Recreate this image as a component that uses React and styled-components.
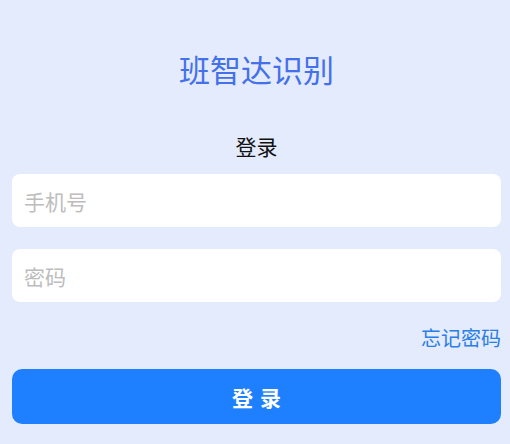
import React, { useState } from 'react';
import styled, { createGlobalStyle } from 'styled-components';

const GlobalStyle = createGlobalStyle`
    html, body {
        margin: 0;
        padding: 0;
        background: #e3ebfd;
    }
    body {
        font-family: "Noto Sans CJK SC", "Noto Sans", sans-serif;
    }
`

const Page = styled.div`
    min-height: 444px;
    padding: 53px 9px 0 12px;
    box-sizing: border-box;
    display: flex;
    flex-direction: column;
`

const Title = styled.h1`
    margin: 0;
    font-size: 31px;
    line-height: 32px;
    font-weight: 400;
    color: #4470ea;
    text-align: center;
`

const Subtitle = styled.h2`
    margin: 50px 0 0;
    font-size: 21px;
    line-height: 22px;
    font-weight: 400;
    color: #111;
    text-align: center;
`

const Form = styled.form`
    display: flex;
    flex-direction: column;
    gap: 22px;
    margin-top: 17px;
`

const Field = styled.input`
    height: 53px;
    border: none;
    border-radius: 8px;
    background: #ffffff;
    padding: 0 12px;
    font-family: inherit;
    font-size: 21px;
    color: #333;
    outline: none;
    box-sizing: border-box;
    &::placeholder {
        color: #bdbdbd;
    }
`

const LinkRow = styled.div`
    display: flex;
    justify-content: flex-end;
    margin-top: 25px;
`

const ForgotLink = styled.a`
    font-size: 20px;
    line-height: 22px;
    color: #2a7ee4;
    text-decoration: none;
    cursor: pointer;
`

const SubmitButton = styled.button`
    margin-top: 20px;
    height: 55px;
    border: none;
    border-radius: 10px;
    background: #1f80ff;
    color: #ffffff;
    font-family: inherit;
    font-size: 21px;
    font-weight: 700;
    letter-spacing: 7px;
    text-indent: 7px;
    cursor: pointer;
`

const App = () => {
    const [phone, setPhone] = useState('');
    const [password, setPassword] = useState('');

    return (
        <Page>
            <GlobalStyle />
            <Title>班智达识别</Title>
            <Subtitle>登录</Subtitle>
            <Form onSubmit={(e) => e.preventDefault()}>
                <Field placeholder="手机号" value={phone} onChange={(e) => setPhone(e.target.value)} />
                <Field type="password" placeholder="密码" value={password} onChange={(e) => setPassword(e.target.value)} />
            </Form>
            <LinkRow>
                <ForgotLink>忘记密码</ForgotLink>
            </LinkRow>
            <SubmitButton type="button">登录</SubmitButton>
        </Page>
    )
}

export default App;
